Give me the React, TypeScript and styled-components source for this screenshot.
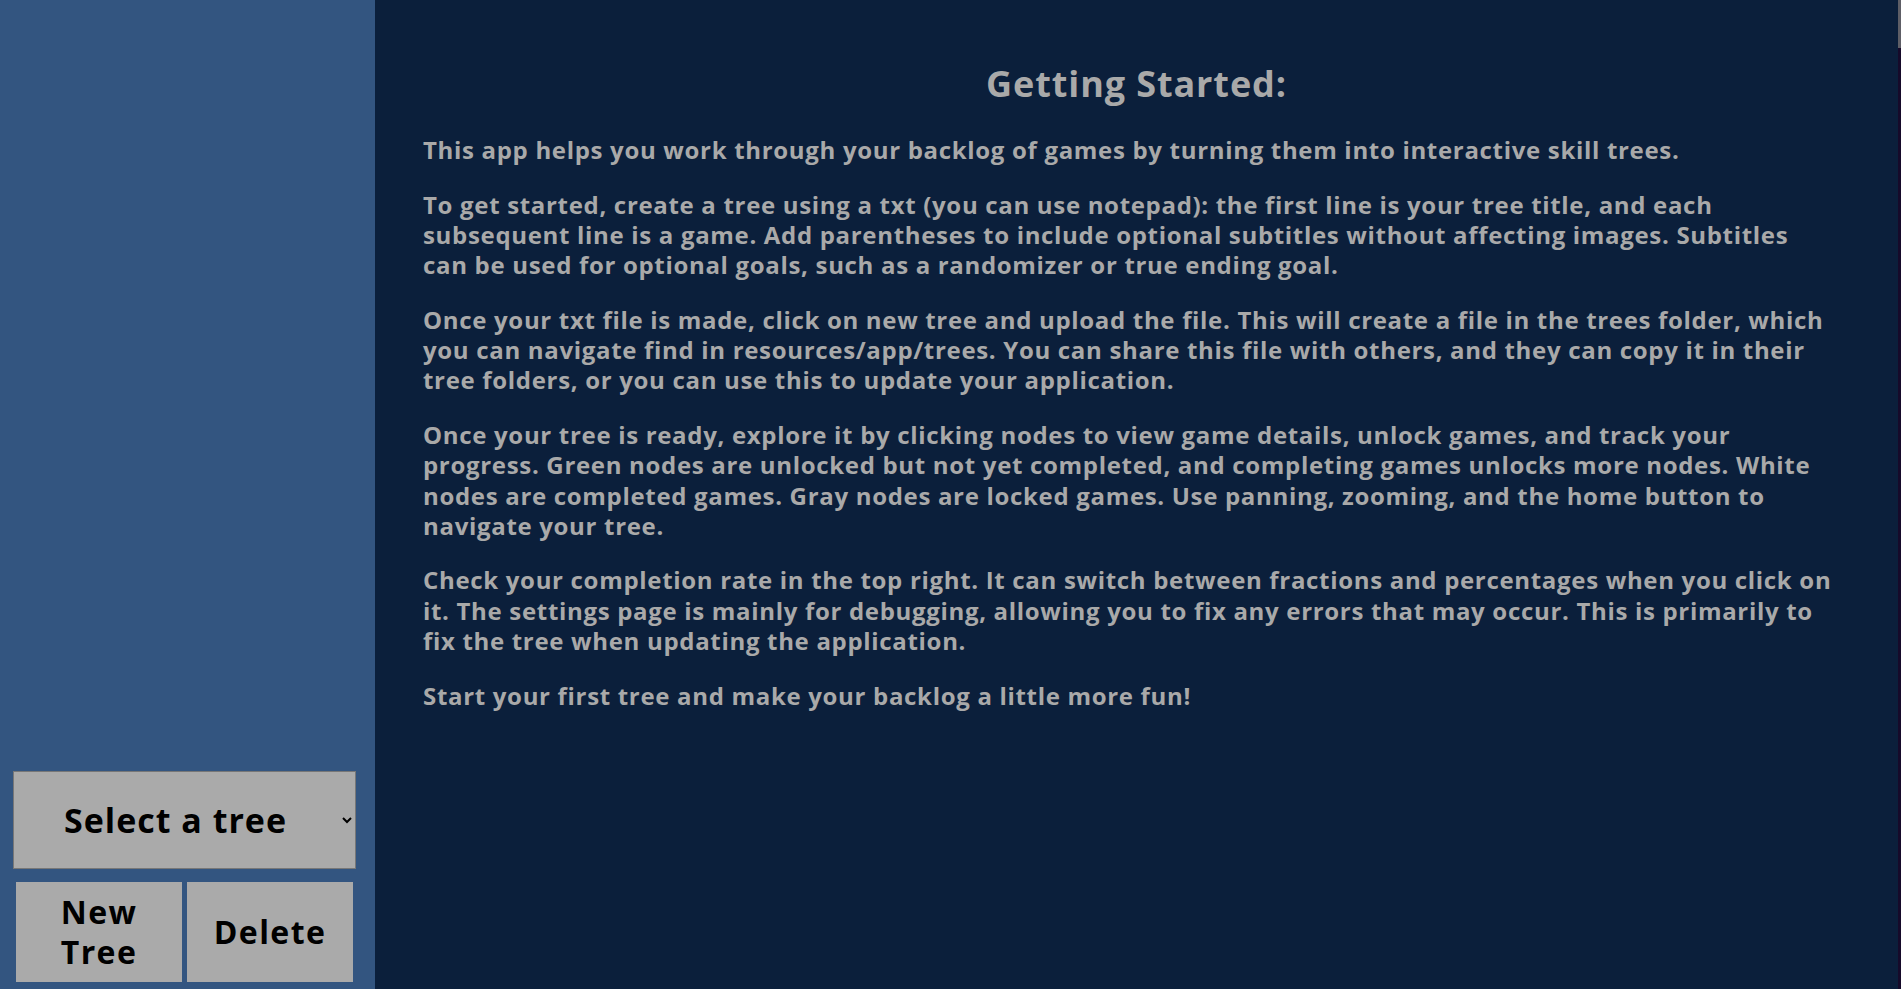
import React from "react";
import styled, { createGlobalStyle } from "styled-components";

const FONT = `"Open Sans", "Liberation Sans", sans-serif`;

const GlobalStyle = createGlobalStyle`
  html, body {
    margin: 0;
    padding: 0;
    height: 100%;
    overflow: hidden;
  }
  body {
    font-family: ${FONT};
  }
  #root {
    height: 100%;
  }
`;

const Shell = styled.div`
  display: flex;
  height: 100vh;
  width: 100vw;
`;

const Sidebar = styled.aside`
  width: 375px;
  flex: 0 0 375px;
  background: #335580;
  display: flex;
  flex-direction: column;
  justify-content: flex-end;
  box-sizing: border-box;
  padding: 0 19px 7px 13px;
`;

const Controls = styled.div`
  display: flex;
  flex-direction: column;
  gap: 13px;
`;

const TreeSelect = styled.select`
  width: 343px;
  height: 98px;
  box-sizing: border-box;
  background: #aaaaaa;
  border: 1px solid #777777;
  border-radius: 0;
  color: #000;
  font-family: ${FONT};
  font-weight: 700;
  font-size: 34px;
  letter-spacing: 1px;
  text-align: center;
  text-align-last: center;
  padding: 0 6px 0 0;
  outline: none;
`;

const ButtonRow = styled.div`
  display: grid;
  grid-template-columns: 166px 166px;
  gap: 5px;
  padding-left: 3px;
`;

const ActionButton = styled.button`
  height: 100px;
  background: #aaaaaa;
  border: none;
  border-radius: 0;
  color: #000;
  font-family: ${FONT};
  font-weight: 700;
  font-size: 32px;
  line-height: 40px;
  letter-spacing: 1.4px;
  padding: 0 24px;
  cursor: pointer;
`;

const Main = styled.main`
  flex: 1;
  background: #0b1f3b;
  box-sizing: border-box;
  padding: 63px 48px 0 48px;
  color: #a9a9a9;
  font-family: ${FONT};
  font-weight: 700;
`;

const Title = styled.h1`
  margin: 0 0 30px;
  text-align: center;
  font-size: 36px;
  line-height: 42px;
  font-weight: 700;
  letter-spacing: 0.9px;
`;

const Paragraph = styled.p`
  margin: 0 0 24.3px;
  max-width: 1412px;
  font-size: 24px;
  line-height: 30.3px;
  letter-spacing: 0.68px;
`;

const ScrollTrack = styled.div`
  flex: 0 0 3px;
  display: flex;
  flex-direction: column;
  background: #160a2a;
`;

const ScrollThumb = styled.div`
  height: 48px;
  background: #5e5e66;
`;

export default function App() {
  return (
    <>
      <GlobalStyle />
      <Shell>
        <Sidebar>
          <Controls>
            <TreeSelect defaultValue="">
              <option value="">Select a tree</option>
            </TreeSelect>
            <ButtonRow>
              <ActionButton>New Tree</ActionButton>
              <ActionButton>Delete</ActionButton>
            </ButtonRow>
          </Controls>
        </Sidebar>
        <Main>
          <Title>Getting Started:</Title>
          <Paragraph>
            This app helps you work through your backlog of games by turning them into interactive skill trees.
          </Paragraph>
          <Paragraph>
            To get started, create a tree using a txt (you can use notepad): the first line is your tree title, and each
            subsequent line is a game. Add parentheses to include optional subtitles without affecting images. Subtitles
            can be used for optional goals, such as a randomizer or true ending goal.
          </Paragraph>
          <Paragraph>
            Once your txt file is made, click on new tree and upload the file. This will create a file in the trees folder, which
            you can navigate find in resources/app/trees. You can share this file with others, and they can copy it in their
            tree folders, or you can use this to update your application.
          </Paragraph>
          <Paragraph>
            Once your tree is ready, explore it by clicking nodes to view game details, unlock games, and track your
            progress. Green nodes are unlocked but not yet completed, and completing games unlocks more nodes. White
            nodes are completed games. Gray nodes are locked games. Use panning, zooming, and the home button to
            navigate your tree.
          </Paragraph>
          <Paragraph>
            Check your completion rate in the top right. It can switch between fractions and percentages when you click on
            it. The settings page is mainly for debugging, allowing you to fix any errors that may occur. This is primarily to
            fix the tree when updating the application.
          </Paragraph>
          <Paragraph>Start your first tree and make your backlog a little more fun!</Paragraph>
        </Main>
        <ScrollTrack>
          <ScrollThumb />
        </ScrollTrack>
      </Shell>
    </>
  );
}
